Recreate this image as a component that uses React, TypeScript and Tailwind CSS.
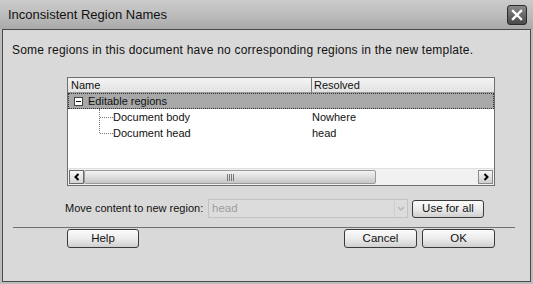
import React from "react";

const font = { fontFamily: '"Liberation Sans", Arial, sans-serif' };

function Btn({ children, className = "" }: { children: React.ReactNode; className?: string }) {
  return (
    <div
      className={
        "shrink-0 flex items-center justify-center rounded-[3px] border border-[#3a3a3a] bg-gradient-to-b from-[#fbfbfb] via-[#ececec] to-[#cfcfcf] text-[11.5px] text-[#111] " +
        className
      }
    >
      {children}
    </div>
  );
}

export default function App() {
  return (
    <div
      className="w-[533px] h-[284px] flex flex-col bg-[#bdbdbd] overflow-hidden"
      style={font}
    >
      {/* title bar */}
      <div className="h-[29px] flex items-center justify-between pl-[8px] pr-[6px] bg-gradient-to-b from-[#cbcbcb] via-[#bdbdbd] to-[#a9a9a9]">
        <span className="text-[13px] text-[#111] leading-none">Inconsistent Region Names</span>
        <div className="w-[20px] h-[20px] rounded-[3px] border border-[#2c2c2c] bg-gradient-to-b from-[#8a8a8a] to-[#4a4a4a] flex items-center justify-center">
          <svg width="12" height="12" viewBox="0 0 12 12">
            <path d="M2 2 L10 10 M10 2 L2 10" stroke="#fff" strokeWidth="2.4" strokeLinecap="square" />
          </svg>
        </div>
      </div>
      {/* client */}
      <div className="flex-1 mx-[2px] mb-[2px] border border-[#4a4a4a] bg-[#d9d9d9] flex flex-col">
        <div className="pl-[9px] pt-[13px] text-[12px] tracking-[0.22px] text-[#111] leading-[14px] whitespace-nowrap">
          Some regions in this document have no corresponding regions in the new template.
        </div>
        {/* list */}
        <div className="ml-[64px] mt-[20px] w-[428px] h-[109px] border border-[#6e6e6e] bg-white flex flex-col text-[11px] text-[#111]">
          <div className="h-[15px] flex border-b border-[#9a9a9a] bg-gradient-to-b from-[#f4f4f4] to-[#e2e2e2] leading-[15px]">
            <div className="w-[244px] pl-[3px] border-r border-[#7a7a7a]">Name</div>
            <div className="pl-[2px]">Resolved</div>
          </div>
          <div className="h-[16px] flex items-center bg-[#a8a8a8] border border-dotted border-[#333]">
            <div className="ml-[5px] w-[9px] h-[9px] border border-[#444] bg-white flex items-center justify-center">
              <div className="w-[5px] h-[1px] bg-[#111]" />
            </div>
            <span className="ml-[5px] leading-none">Editable regions</span>
          </div>
          <div className="relative flex flex-col">
            <div className="absolute left-[31px] top-0 h-[24px] border-l border-dotted border-[#777]" />
            <div className="h-[16px] flex items-center">
              <div className="ml-[32px] w-[13px] border-t border-dotted border-[#777]" />
              <span className="w-[199px]">Document body</span>
              <span>Nowhere</span>
            </div>
            <div className="h-[16px] flex items-center">
              <div className="ml-[32px] w-[13px] border-t border-dotted border-[#777]" />
              <span className="w-[199px]">Document head</span>
              <span>head</span>
            </div>
          </div>
          <div className="flex-1" />
          {/* scrollbar */}
          <div className="h-[17px] flex items-stretch bg-[#f1f1f1] border-t border-[#e0e0e0] p-[1px]">
            <div className="w-[15px] border border-[#6a6a6a] bg-gradient-to-b from-[#f8f8f8] to-[#d4d4d4] flex items-center justify-center">
              <svg width="8" height="8" viewBox="0 0 8 8">
                <path d="M5.5 1 L2.5 4 L5.5 7" stroke="#000" strokeWidth="2" fill="none" />
              </svg>
            </div>
            <div className="w-[292px] border border-[#9a9a9a] rounded-[2px] bg-gradient-to-b from-[#f3f3f3] via-[#dedede] to-[#c6c6c6] flex items-center justify-center">
              <div className="flex gap-[1px]">
                <div className="w-[1px] h-[7px] bg-[#777]" />
                <div className="w-[1px] h-[7px] bg-[#777]" />
                <div className="w-[1px] h-[7px] bg-[#777]" />
                <div className="w-[1px] h-[7px] bg-[#777]" />
              </div>
            </div>
            <div className="flex-1" />
            <div className="w-[15px] border border-[#8a8a8a] bg-gradient-to-b from-[#f8f8f8] to-[#cfcfcf] flex items-center justify-center">
              <svg width="8" height="8" viewBox="0 0 8 8">
                <path d="M2.5 1 L5.5 4 L2.5 7" stroke="#000" strokeWidth="2" fill="none" />
              </svg>
            </div>
          </div>
        </div>
        {/* move content row */}
        <div className="mt-[13px] flex items-center text-[12px]">
          <span className="ml-[62px] w-[143px] shrink-0 whitespace-nowrap text-[11px] text-[#111]">Move content to new region:</span>
          <div className="shrink-0 w-[200px] h-[19px] border border-[#c2c2c2] bg-[#dcdcdc] flex items-center">
            <span className="pl-[3px] flex-1 text-[11.5px] text-[#9c9c9c]">head</span>
            <div className="w-[13px] h-full border-l border-[#cfcfcf] flex items-center justify-center">
              <svg width="8" height="6" viewBox="0 0 8 6">
                <path d="M1 1 L4 4 L7 1" stroke="#b8b8b8" strokeWidth="1.5" fill="none" />
              </svg>
            </div>
          </div>
          <Btn className="ml-[4px] w-[72px] h-[18px]">Use for all</Btn>
        </div>
        {/* separator */}
        <div className="mt-[9px] ml-[10px] w-[502px] h-[1px] bg-[#707070]" />
        {/* buttons */}
        <div className="mt-[1px] flex">
          <Btn className="ml-[64px] w-[72px] h-[19px]">Help</Btn>
          <div className="flex-1" />
          <Btn className="w-[73px] h-[19px]">Cancel</Btn>
          <Btn className="ml-[5px] mr-[35px] w-[73px] h-[19px]">OK</Btn>
        </div>
      </div>
    </div>
  );
}
